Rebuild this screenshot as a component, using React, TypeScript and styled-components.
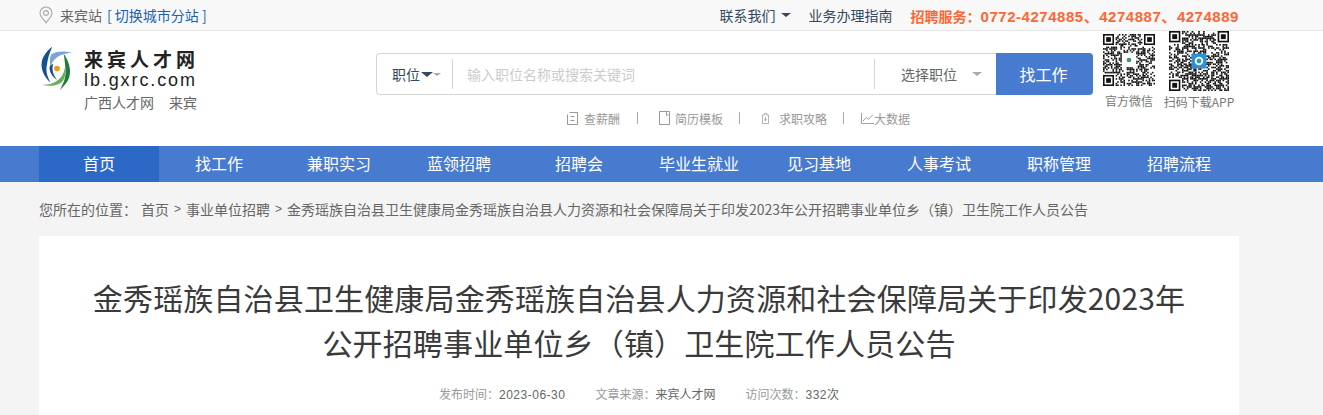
import { createGlobalStyle, styled } from "styled-components";

const CJK = `"Noto Sans CJK SC", "Liberation Sans", sans-serif`;

const GlobalStyle = createGlobalStyle`
  html, body {
    margin: 0;
    height: 415px;
    overflow: hidden;
    background: #f4f4f4;
    font-family: ${CJK};
  }
  * { box-sizing: border-box; }
`;

const TopBar = styled.div`
  height: 31px;
  background: #f8f8f8;
  border-bottom: 1px solid #e5e5e5;
`;

const Wrap = styled.div`
  width: 1200px;
  margin-left: 39px;
  display: flex;
  align-items: center;
`;

const TopLeft = styled.div`
  display: flex;
  align-items: center;
  height: 30px;
  font-size: 14px;
  color: #666;
  flex: 1;
`;

const PinBox = styled.span`
  display: flex;
  width: 21px;
`;

const SwitchLink = styled.a`
  color: #1a5fb4;
  margin-left: 5px;
`;

const TopRight = styled.div`
  display: flex;
  align-items: center;
  height: 30px;
  font-size: 14px;
  color: #34495e;
`;

const Caret = styled.i<{ $color?: string; $w?: number; $ml?: number }>`
  display: inline-block;
  width: 0;
  height: 0;
  border-left: ${(p) => p.$w ?? 5}px solid transparent;
  border-right: ${(p) => p.$w ?? 5}px solid transparent;
  border-top: ${(p) => (p.$w ?? 5) - 0.5}px solid ${(p) => p.$color ?? "#34495e"};
  margin-left: ${(p) => p.$ml ?? 5}px;
`;

const GuideLink = styled.span`
  margin-left: 18px;
`;

const Hotline = styled.span`
  margin-left: 18px;
  color: #ff6633;
  font-weight: 700;
  font-size: 14px;
  white-space: nowrap;
`;

const HotlineNumber = styled.span`
  font-family: "Liberation Sans", "Noto Sans CJK SC", sans-serif;
  font-size: 15px;
  letter-spacing: 0.53px;
`;

const Header = styled.header`
  height: 115px;
  background: #fff;
`;

const HeaderRow = styled(Wrap)`
  align-items: flex-start;
  height: 115px;
`;

const LogoCol = styled.div`
  width: 337px;
  flex: none;
  padding: 14px 0 0 2px;
  display: flex;
  align-items: flex-start;
`;

const LogoText = styled.div`
  margin: 3px 0 0 9px;
  display: flex;
  flex-direction: column;
`;

const LogoName = styled.div`
  font-family: "Noto Sans CJK SC", serif;
  font-weight: 700;
  font-size: 19px;
  line-height: 22px;
  letter-spacing: 4px;
  color: #222;
  white-space: nowrap;
`;

const LogoDomain = styled.div`
  font-family: "Liberation Sans", sans-serif;
  font-size: 18px;
  line-height: 20px;
  letter-spacing: 1.9px;
  color: #222;
`;

const LogoSub = styled.div`
  display: flex;
  gap: 15px;
  font-size: 14px;
  line-height: 18px;
  margin-top: 3px;
  color: #666;
`;

const SearchCol = styled.div`
  width: 717px;
  flex: none;
  padding-top: 22px;
`;

const SearchBox = styled.div`
  display: flex;
  align-items: center;
  height: 42px;
  border: 1px solid #d5d5d5;
  border-right: 0;
  border-radius: 4px;
  background: #fff;
`;

const TypeSelect = styled.div`
  width: 76px;
  height: 30px;
  flex: none;
  display: flex;
  align-items: center;
  padding-left: 15px;
  font-size: 14px;
  color: #34495e;
  border-right: 1px solid #d5d5d5;
`;

const KeywordInput = styled.input`
  flex: 1;
  min-width: 0;
  height: 30px;
  border: 0;
  outline: 0;
  padding: 0 14px;
  font-size: 14px;
  font-family: ${CJK};
  &::placeholder {
    color: #ccc;
  }
`;

const PositionSelect = styled.div`
  width: 122px;
  height: 30px;
  flex: none;
  display: flex;
  align-items: center;
  padding-left: 26px;
  font-size: 14px;
  color: #666;
  border-left: 1px solid #d5d5d5;
`;

const SearchButton = styled.button`
  width: 97px;
  height: 42px;
  margin: -1px 0;
  padding: 0 2px 0 0;
  flex: none;
  border: 0;
  border-radius: 0 4px 4px 0;
  background: #477bd0;
  color: #fff;
  font-size: 16px;
  font-family: ${CJK};
`;

const QuickLinks = styled.div`
  display: flex;
  align-items: center;
  height: 18px;
  margin-top: 14px;
  padding-left: 190px;
  font-size: 12px;
  color: #999;
`;

const QuickLink = styled.span<{ $gap: number }>`
  display: flex;
  align-items: center;
  gap: ${(p) => p.$gap}px;
`;

const Sep = styled.i<{ $l: number; $r: number }>`
  width: 1px;
  height: 12px;
  background: #aaa;
  margin: 0 ${(p) => p.$r}px 0 ${(p) => p.$l}px;
`;

const QrGroup = styled.div`
  flex: none;
  display: flex;
  margin-left: 10px;
`;

const QrItem = styled.div<{ $w: number; $top: number; $ml?: number }>`
  width: ${(p) => p.$w}px;
  margin-left: ${(p) => p.$ml ?? 0}px;
  padding-top: ${(p) => p.$top}px;
  display: flex;
  flex-direction: column;
  align-items: center;
  font-size: 12px;
  line-height: 16px;
  color: #777;
  white-space: nowrap;
`;

const QrCaption = styled.span<{ $mt: number }>`
  margin-top: ${(p) => p.$mt}px;
`;

const Nav = styled.nav`
  height: 36px;
  background: #477bd0;
`;

const NavRow = styled.div`
  width: 1200px;
  margin-left: 39px;
  display: grid;
  grid-template-columns: repeat(10, 120px);
`;

const NavItem = styled.a<{ $active?: boolean }>`
  height: 36px;
  line-height: 35px;
  text-align: center;
  font-size: 16px;
  color: #fff;
  background: ${(p) => (p.$active ? "#2c68c6" : "transparent")};
`;

const Crumbs = styled.div`
  margin-left: 39px;
  height: 54px;
  display: flex;
  align-items: center;
  font-size: 14px;
  color: #666;
  white-space: nowrap;
`;

const CrumbHome = styled.span`
  margin-left: 4px;
`;

const CrumbArrow = styled.span`
  margin: 0 5px;
  font-family: "Liberation Sans", sans-serif;
  font-size: 12px;
`;

const Article = styled.main`
  width: 1200px;
  margin-left: 39px;
  min-height: 300px;
  background: #fff;
  padding: 39px 50px 0;
`;

const Title = styled.h1`
  margin: 0;
  font-size: 30px;
  font-weight: 400;
  line-height: 45px;
  letter-spacing: 0.15px;
  color: #3a3a3a;
  text-align: center;
  font-family: "Noto Sans CJK SC", sans-serif;
`;

const Meta = styled.div`
  margin-top: 17px;
  display: flex;
  justify-content: center;
  gap: 30px;
  font-size: 12px;
  line-height: 24px;
  color: #999;
`;

const MetaValue = styled.span`
  color: #666;
`;

const MetaNumber = styled(MetaValue)`
  font-family: "Liberation Sans", sans-serif;
  letter-spacing: 0.5px;
`;

const PinIcon = () => (
  <svg width="14" height="18" viewBox="0 0 14 18" fill="none" stroke="#a8a8a8" strokeWidth="1.1">
    <path d="M7 16.8C4 13 1 10.4 1 7a6 6 0 0 1 12 0c0 3.4-3 6-6 9.8z" />
    <circle cx="7" cy="7" r="2.4" />
  </svg>
);

const LogoMark = () => (
  <svg width="34" height="47" viewBox="0 0 36 48">
    <path d="M12 1C4 7-1 15 1 24c1 6 5 11 9 15 -3-6-5-11-4-17C7 14 9 7 12 1z" fill="#14518f" />
    <path d="M11 9c4-3 12-4 22-2-6 1-13 2-17 6-3 3-5 6-6 9-1-5-1-10 1-13z" fill="#7ba6d2" />
    <path d="M13 19c-2 6 0 12 4 17-5-3-8-8-8-13 0-2 2-3 4-4z" fill="#14518f" />
    <path d="M24 8c6 9 8 17 6 25-2 6-6 10-10 14 3-6 6-12 6-18 0-7-1-14-2-21z" fill="#237a3c" />
    <path d="M0 41c9 1 17-2 22-9 2-3 3-6 3-9 2 7 0 14-5 17-6 3-13 3-20 1z" fill="#66b05c" />
    <circle cx="17" cy="24" r="3" fill="#f09a12" />
  </svg>
);

const SalaryIcon = () => (
  <svg width="13" height="15" viewBox="0 0 13 15" fill="none" stroke="#999">
    <path d="M3.5 1.5h8v12h-10v-10" />
    <path d="M4.5 5.5h4M4.5 9.5h4" />
  </svg>
);

const ResumeIcon = () => (
  <svg width="11" height="14" viewBox="0 0 11 14" fill="none" stroke="#999">
    <path d="M.5.5h10v13H.5zM7.500.5v4l2-1" />
  </svg>
);

const GuideIcon = () => (
  <svg width="7" height="13" viewBox="0 0 9 14" fill="none" stroke="#999">
    <path d="M3 .5h3v2h2.500v11H.5v-11H3zM4.500 5v5M3 8l1.500 2L6 8" />
  </svg>
);

const ChartIcon = () => (
  <svg width="13" height="12" viewBox="0 0 14 13" fill="none" stroke="#999">
    <path d="M.5 1v11.500H14M2 10l3.500-4 2.500 2 5-5" />
  </svg>
);

// pseudo random modules, the real codes can't be read from a small screenshot
const QrCode = ({ size, cells, seed, logo }: { size: number; cells: number; seed: number; logo: string }) => {
  let s = seed;
  const next = () => {
    s = (s * 16807) % 2147483647;
    return s % 100;
  };
  const inFinder = (x: number, y: number) =>
    (x < 8 && y < 8) || (x >= cells - 8 && y < 8) || (x < 8 && y >= cells - 8);
  const mods: { x: number; y: number }[] = [];
  for (let y = 0; y < cells; y++) {
    for (let x = 0; x < cells; x++) {
      if (!inFinder(x, y) && next() < 50) mods.push({ x, y });
    }
  }
  const finders = [
    [0, 0],
    [cells - 7, 0],
    [0, cells - 7],
  ];
  const mid = cells / 2;
  return (
    <svg width={size} height={size} viewBox={`0 0 ${cells} ${cells}`}>
      <rect width={cells} height={cells} fill="#fff" />
      {mods.map((m) => (
        <rect key={`${m.x}-${m.y}`} x={m.x} y={m.y} width="1" height="1" fill="#111" />
      ))}
      {finders.map(([x, y]) => (
        <g key={`${x}-${y}`}>
          <rect x={x + 0.5} y={y + 0.5} width="6" height="6" fill="#fff" stroke="#111" />
          <rect x={x + 2} y={y + 2} width="3" height="3" fill="#111" />
        </g>
      ))}
      <rect x={mid - 4.5} y={mid - 4.5} width="9" height="9" fill={logo} />
      <circle cx={mid} cy={mid} r="2.600" fill="#fff" />
      <circle cx={mid} cy={mid} r="1.500" fill={logo === "#fff" ? "#3f9a6a" : logo} />
    </svg>
  );
};

const navItems = ["首页", "找工作", "兼职实习", "蓝领招聘", "招聘会", "毕业生就业", "见习基地", "人事考试", "职称管理", "招聘流程"];

export default function App() {
  return (
    <>
      <GlobalStyle />
      <TopBar>
        <Wrap>
          <TopLeft>
            <PinBox>
              <PinIcon />
            </PinBox>
            来宾站
            <SwitchLink>[ 切换城市分站 ]</SwitchLink>
          </TopLeft>
          <TopRight>
            联系我们
            <Caret />
            <GuideLink>业务办理指南</GuideLink>
            <Hotline>
              招聘服务：<HotlineNumber>0772-4274885、4274887、4274889</HotlineNumber>
            </Hotline>
          </TopRight>
        </Wrap>
      </TopBar>
      <Header>
        <HeaderRow>
          <LogoCol>
            <LogoMark />
            <LogoText>
              <LogoName>来宾人才网</LogoName>
              <LogoDomain>lb.gxrc.com</LogoDomain>
              <LogoSub>
                <span>广西人才网</span>
                <span>来宾</span>
              </LogoSub>
            </LogoText>
          </LogoCol>
          <SearchCol>
            <SearchBox>
              <TypeSelect>
                职位
                <Caret $ml={1} $w={6} />
                <Caret $ml={0} $w={4} $color="#aaa" />
              </TypeSelect>
              <KeywordInput placeholder="输入职位名称或搜索关键词" />
              <PositionSelect>
                选择职位
                <Caret $ml={15} $color="#aaa" />
              </PositionSelect>
              <SearchButton>找工作</SearchButton>
            </SearchBox>
            <QuickLinks>
              <QuickLink $gap={5}>
                <SalaryIcon />
                查薪酬
              </QuickLink>
              <Sep $l={17} $r={21} />
              <QuickLink $gap={5}>
                <ResumeIcon />
                简历模板
              </QuickLink>
              <Sep $l={16} $r={22} />
              <QuickLink $gap={10}>
                <GuideIcon />
                求职攻略
              </QuickLink>
              <Sep $l={16} $r={17} />
              <QuickLink $gap={0}>
                <ChartIcon />
                大数据
              </QuickLink>
            </QuickLinks>
          </SearchCol>
          <QrGroup>
            <QrItem $w={52} $top={3}>
              <QrCode size={52} cells={33} seed={1237} logo="#fff" />
              <QrCaption $mt={7}>官方微信</QrCaption>
            </QrItem>
            <QrItem $w={60} $ml={14} $top={0}>
              <QrCode size={60} cells={37} seed={8191} logo="#2a93d5" />
              <QrCaption $mt={3}>扫码下载APP</QrCaption>
            </QrItem>
          </QrGroup>
        </HeaderRow>
      </Header>
      <Nav>
        <NavRow>
          {navItems.map((item, i) => (
            <NavItem key={item} $active={i === 0}>
              {item}
            </NavItem>
          ))}
        </NavRow>
      </Nav>
      <Crumbs>
        您所在的位置：
        <CrumbHome>首页</CrumbHome>
        <CrumbArrow>&gt;</CrumbArrow>
        事业单位招聘
        <CrumbArrow>&gt;</CrumbArrow>
        金秀瑶族自治县卫生健康局金秀瑶族自治县人力资源和社会保障局关于印发2023年公开招聘事业单位乡（镇）卫生院工作人员公告
      </Crumbs>
      <Article>
        <Title>金秀瑶族自治县卫生健康局金秀瑶族自治县人力资源和社会保障局关于印发2023年公开招聘事业单位乡（镇）卫生院工作人员公告</Title>
        <Meta>
          <span>
            发布时间：<MetaNumber>2023-06-30</MetaNumber>
          </span>
          <span>
            文章来源：<MetaValue>来宾人才网</MetaValue>
          </span>
          <span>
            访问次数：<MetaNumber>332</MetaNumber><MetaValue>次</MetaValue>
          </span>
        </Meta>
      </Article>
    </>
  );
}
